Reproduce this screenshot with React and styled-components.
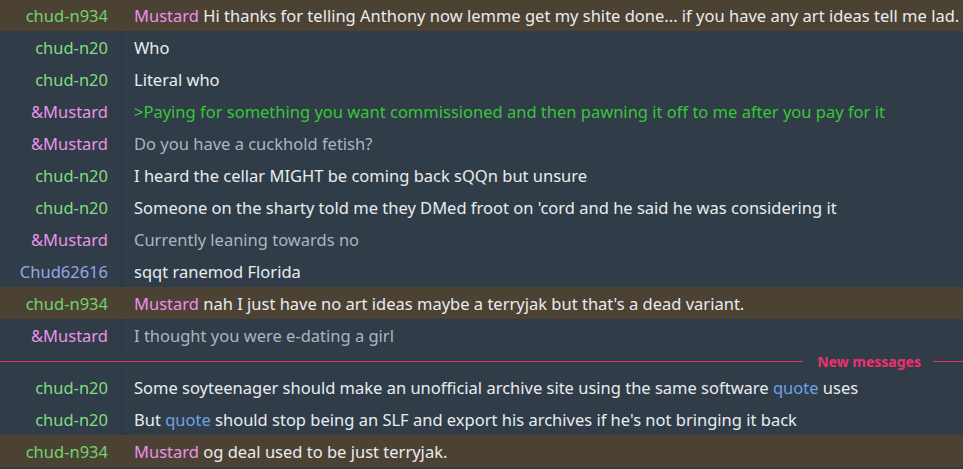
import React from 'react';
import styled, { createGlobalStyle } from 'styled-components';

const GlobalStyle = createGlobalStyle`
  html, body {
    margin: 0;
    padding: 0;
    background: #303c47;
  }
  body {
    font-family: 'Noto Sans', 'Open Sans', sans-serif;
    font-size: 16.5px;
    overflow: hidden;
  }
`;

const StyledLog = styled.div`
  display: flex;
  flex-direction: column;
  width: 963px;
  height: 469px;
  background: #303c47;
  color: #e8ecf0;
`;

const Row = styled.div`
  display: flex;
  height: ${props => (props.first ? 31 : 32)}px;
  line-height: ${props => (props.first ? 32 : 34)}px;
  background: ${props => (props.highlight ? '#4c4233' : 'transparent')};
  white-space: nowrap;
  overflow: hidden;
`;

const Nick = styled.div`
  flex: 0 0 108px;
  width: 108px;
  padding-right: 13px;
  border-right: 1px solid ${props => (props.highlight ? 'transparent' : '#29333d')};
  text-align: right;
  color: ${props => props.color};
`;

const Text = styled.div`
  padding-left: 12px;
  color: ${props => props.color || '#e8ecf0'};
`;

const Mention = styled.span`
  color: #ee8fea;
`;

const Link = styled.span`
  color: #6fa0e6;
`;

const Divider = styled.div`
  display: flex;
  align-items: center;
  height: 20px;
  .line {
    flex: 1;
    height: 1px;
    background: #e0306b;
  }
  .tail {
    width: 30px;
    height: 1px;
    background: #e0306b;
  }
  .label {
    color: #f0306e;
    font-weight: bold;
    font-size: 14px;
    padding: 0 12px 0 14px;
  }
`;

const Gap = styled.div`
  flex: 1;
`;

const colors = {
  n934: '#71d36f',
  n20: '#82dc82',
  mustard: '#ea94e8',
  chud: '#97a7e6',
};

const rows = [
  { nick: 'chud-n934', c: colors.n934, hl: true, mention: true, text: 'Hi thanks for telling Anthony now lemme get my shite done... if you have any art ideas tell me lad.' },
  { nick: 'chud-n20', c: colors.n20, text: 'Who' },
  { nick: 'chud-n20', c: colors.n20, text: 'Literal who' },
  { nick: '&Mustard', c: colors.mustard, tc: '#38c63a', text: '>Paying for something you want commissioned and then pawning it off to me after you pay for it' },
  { nick: '&Mustard', c: colors.mustard, tc: '#a9b6c2', text: 'Do you have a cuckhold fetish?' },
  { nick: 'chud-n20', c: colors.n20, text: 'I heard the cellar MIGHT be coming back sQQn but unsure' },
  { nick: 'chud-n20', c: colors.n20, text: "Someone on the sharty told me they DMed froot on 'cord and he said he was considering it" },
  { nick: '&Mustard', c: colors.mustard, tc: '#a9b6c2', text: 'Currently leaning towards no' },
  { nick: 'Chud62616', c: colors.chud, text: 'sqqt ranemod Florida' },
  { nick: 'chud-n934', c: colors.n934, hl: true, mention: true, text: "nah I just have no art ideas maybe a terryjak but that's a dead variant." },
  { nick: '&Mustard', c: colors.mustard, tc: '#a9b6c2', text: 'I thought you were e-dating a girl' },
];

const newRows = [
  { nick: 'chud-n20', c: colors.n20, parts: ['Some soyteenager should make an unofficial archive site using the same software ', 'quote', ' uses'] },
  { nick: 'chud-n20', c: colors.n20, parts: ['But ', 'quote', " should stop being an SLF and export his archives if he's not bringing it back"] },
  { nick: 'chud-n934', c: colors.n934, hl: true, mention: true, text: 'og deal used to be just terryjak.' },
];

const renderRow = (r, key, first) => (
  <Row key={key} highlight={r.hl} first={first}>
    <Nick color={r.c} highlight={r.hl}>{r.nick}</Nick>
    <Text color={r.tc}>
      {r.mention && <><Mention>Mustard</Mention>{' '}</>}
      {r.parts
        ? r.parts.map((p, j) => (j % 2 ? <Link key={j}>{p}</Link> : <span key={j}>{p}</span>))
        : r.text}
    </Text>
  </Row>
);

const App = () => (
  <StyledLog>
    <GlobalStyle />
    {rows.map((r, i) => renderRow(r, i, i === 0))}
    <Divider>
      <div className="line" />
      <span className="label">New messages</span>
      <div className="tail" />
    </Divider>
    {newRows.map((r, i) => renderRow(r, 'n' + i, false))}
    <Gap />
  </StyledLog>
);

export default App;
